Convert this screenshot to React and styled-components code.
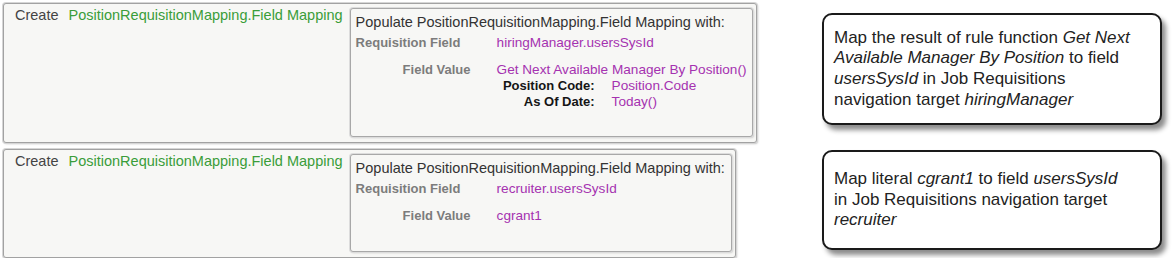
import React from "react";
import styled, { createGlobalStyle } from "styled-components";

const Global = createGlobalStyle`
  html, body { margin: 0; padding: 0; background: #ffffff; }
  body { font-family: "Liberation Sans", Arial, sans-serif; }
`;

const Page = styled.div`
  display: grid;
  grid-template-columns: 819px 340px;
  row-gap: 6px;
  padding: 3px 0 0 3px;
  align-items: start;
`;

const RuleBox = styled.div`
  display: inline-flex;
  align-items: flex-start;
  justify-self: start;
  box-sizing: border-box;
  background: #f7f7f5;
  border: 1px solid #a2a2a2;
  border-radius: 3px;
  box-shadow: 0 0 0 1px #d6d6d6, 1px 1px 2px rgba(0, 0, 0, 0.25);
  padding: 4px 3px 5px 11px;
`;

const Heading = styled.div`
  display: flex;
  gap: 10px;
  font-size: 14.5px;
  line-height: 17px;
  margin-top: -1px;
  margin-right: 7px;
  white-space: nowrap;
`;

const Verb = styled.span`
  color: #444444;
`;

const Entity = styled.span`
  color: #3a9d3a;
`;

const Populate = styled.div`
  box-sizing: border-box;
  background: #f7f7f5;
  border: 1px solid #a8a8a8;
  border-radius: 3px;
  box-shadow: 0 0 0 1px #dcdcdc, 1px 1px 2px rgba(0, 0, 0, 0.2);
  padding: 5px 6px 27px 5px;
`;

const Title = styled.div`
  font-size: 14.5px;
  line-height: 17px;
  color: #333333;
  white-space: nowrap;
`;

const FieldRow = styled.div`
  display: grid;
  grid-template-columns: 141px auto;
  margin-top: ${(p) => p.$gap}px;
`;

const Label = styled.div`
  font-size: 13px;
  font-weight: bold;
  line-height: 16px;
  color: #7c7c7c;
  padding-left: ${(p) => p.$indent || 0}px;
  white-space: nowrap;
`;

const Value = styled.span`
  font-size: 13.6px;
  line-height: 16px;
  color: #a532b0;
  white-space: nowrap;
`;

const ValueStack = styled.div`
  display: flex;
  flex-direction: column;
`;

const Params = styled.div`
  display: grid;
  grid-template-columns: 98px auto;
  column-gap: 17px;
`;

const ParamLabel = styled.div`
  font-size: 13px;
  font-weight: bold;
  line-height: 15.5px;
  color: #151515;
  text-align: right;
  white-space: nowrap;
`;

const ParamValue = styled.div`
  font-size: 13.6px;
  line-height: 15.5px;
  color: #a532b0;
  white-space: nowrap;
`;

const Callout = styled.div`
  box-sizing: border-box;
  width: 340px;
  height: ${(p) => p.$height}px;
  margin-top: ${(p) => p.$top}px;
  background: #ffffff;
  border: 2px solid #1a1a1a;
  border-radius: 10px;
  box-shadow: 4px 5px 5px rgba(0, 0, 0, 0.45);
  display: flex;
  flex-direction: column;
  justify-content: center;
  padding: 0 10px 0 10px;
  font-size: 17px;
  line-height: 20.7px;
  color: #222222;
  white-space: nowrap;
`;

const Line = styled.div``;

export default function App() {
  return (
    <>
      <Global />
      <Page>
        <RuleBox>
          <Heading>
            <Verb>Create</Verb>
            <Entity>PositionRequisitionMapping.Field Mapping</Entity>
          </Heading>
          <Populate>
            <Title>Populate PositionRequisitionMapping.Field Mapping with:</Title>
            <FieldRow $gap={4}>
              <Label>Requisition Field</Label>
              <Value>hiringManager.usersSysId</Value>
            </FieldRow>
            <FieldRow $gap={11}>
              <Label $indent={47}>Field Value</Label>
              <ValueStack>
                <Value>Get Next Available Manager By Position()</Value>
                <Params>
                  <ParamLabel>Position Code:</ParamLabel>
                  <ParamValue>Position.Code</ParamValue>
                  <ParamLabel>As Of Date:</ParamLabel>
                  <ParamValue>Today()</ParamValue>
                </Params>
              </ValueStack>
            </FieldRow>
          </Populate>
        </RuleBox>
        <Callout $height={112} $top={10}>
          <Line>
            Map the result of rule function <i>Get Next</i>
          </Line>
          <Line>
            <i>Available Manager By Position</i> to field
          </Line>
          <Line>
            <i>usersSysId</i> in Job Requisitions
          </Line>
          <Line>
            navigation target <i>hiringManager</i>
          </Line>
        </Callout>

        <RuleBox>
          <Heading>
            <Verb>Create</Verb>
            <Entity>PositionRequisitionMapping.Field Mapping</Entity>
          </Heading>
          <Populate>
            <Title>Populate PositionRequisitionMapping.Field Mapping with:</Title>
            <FieldRow $gap={4}>
              <Label>Requisition Field</Label>
              <Value>recruiter.usersSysId</Value>
            </FieldRow>
            <FieldRow $gap={11}>
              <Label $indent={47}>Field Value</Label>
              <Value>cgrant1</Value>
            </FieldRow>
          </Populate>
        </RuleBox>
        <Callout $height={100} $top={1}>
          <Line>
            Map literal <i>cgrant1</i> to field <i>usersSysId</i>
          </Line>
          <Line>in Job Requisitions navigation target</Line>
          <Line>
            <i>recruiter</i>
          </Line>
        </Callout>
      </Page>
    </>
  );
}
